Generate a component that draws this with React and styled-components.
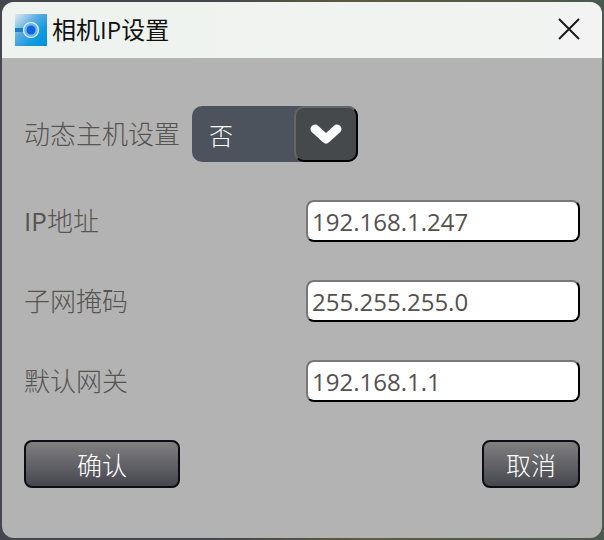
import React from 'react'
import styled, { createGlobalStyle } from 'styled-components'

const GlobalStyle = createGlobalStyle`
    html, body {
        margin: 0;
        padding: 0;
        width: 604px;
        height: 540px;
        overflow: hidden;
        background: #46464c;
    }
    * {
        box-sizing: border-box;
    }
`

const fontStack = `"Open Sans", "Noto Sans CJK SC", sans-serif`

const Page = styled.div`
    width: 604px;
    height: 540px;
    padding: 2px;
    background: linear-gradient(90deg, #46464e 0%, #46464e 36%, #5d5c3c 60%, #4a5a50 100%);
    font-family: ${fontStack};
`

const Window = styled.div`
    width: 600px;
    height: 536px;
    border-radius: 12px;
    overflow: hidden;
    background: #b3b3b3;
    display: flex;
    flex-direction: column;
`

const TitleBar = styled.div`
    height: 56px;
    flex: none;
    background: linear-gradient(90deg, #eef3ef 0%, #f2f3f2 100%);
    display: flex;
    align-items: center;
    padding: 0 14px 0 13px;
`

const TitleText = styled.div`
    margin-left: 5px;
    flex: 1;
    font-size: 24px;
    color: #111;
    line-height: 32px;
`

const CloseButton = styled.button`
    width: 22px;
    height: 22px;
    padding: 0;
    border: none;
    background: none;
    margin: 0 8px 2px 0;
    display: flex;
`

const Body = styled.div`
    flex: 1;
    padding: 48px 22px 0;
    display: flex;
    flex-direction: column;
    gap: 38px;
`

const Row = styled.div`
    display: flex;
    align-items: center;
    justify-content: ${props => props.$spread ? 'space-between' : 'flex-start'};
    gap: ${props => props.$gap || 0}px;
`

const Label = styled.label`
    font-size: 26px;
    font-weight: 300;
    line-height: 32px;
    color: #565351;
`

const LabelLatin = styled.span`
    font-weight: 400;
`

const Select = styled.div`
    width: 166px;
    height: 56px;
    border-radius: 10px;
    background: #4d535d;
    display: flex;
    align-items: center;
    justify-content: space-between;
    padding-left: 17px;
    color: #fff;
    font-size: 24px;
    font-weight: 300;
`

const SelectArrow = styled.div`
    width: 64px;
    height: 56px;
    border-radius: 10px;
    background: #46494b;
    border: 2px solid;
    border-color: #666 #000 #000 #666;
    display: flex;
    align-items: center;
    justify-content: center;
`

const Field = styled.input`
    width: 274px;
    height: 42px;
    border-radius: 8px;
    background: #fff;
    border: 2px solid;
    border-color: #787878 #000 #000 #787878;
    padding: 0 4px;
    outline: none;
    font-family: ${fontStack};
    font-size: 24px;
    color: #55514e;
`

const Button = styled.button`
    width: ${props => props.$width}px;
    height: 48px;
    padding: 0;
    border: 2px solid #0c0c14;
    border-radius: 8px;
    background: linear-gradient(180deg, #808080 0%, #46464f 100%);
    color: #fff;
    font-family: ${fontStack};
    font-size: 25px;
    font-weight: 300;
`

const CameraIcon = () => (
    <svg width="32" height="32" viewBox="0 0 32 32">
        <defs>
            <linearGradient id="iconBg" x1="0" y1="0" x2="1" y2="1">
                <stop offset="0" stopColor="#e2ebf3" />
                <stop offset="0.4" stopColor="#58abe0" />
                <stop offset="0.7" stopColor="#0f9ae2" />
                <stop offset="1" stopColor="#0090dc" />
            </linearGradient>
        </defs>
        <rect width="32" height="32" fill="url(#iconBg)" />
        <rect y="14" width="10" height="4" fill="#1c7fc8" />
        <circle cx="16" cy="16" r="7.5" fill="#6fb6ea" stroke="#f0f6fb" strokeWidth="1.2" />
        <circle cx="16" cy="16" r="4.5" fill="#0f62e0" />
    </svg>
)

const CloseIcon = () => (
    <svg width="22" height="22" viewBox="0 0 22 22">
        <path d="M1 1 L21 21 M21 1 L1 21" stroke="#1a1a1a" strokeWidth="2" fill="none" />
    </svg>
)

const ChevronIcon = () => (
    <svg width="34" height="22" viewBox="0 0 34 22">
        <path
            d="M6 6 L17 16 L28 6"
            fill="none"
            stroke="#fff"
            strokeWidth="9"
            strokeLinecap="round"
            strokeLinejoin="round"
        />
    </svg>
)

const fields = [
    { latin: 'IP', label: '地址', value: '192.168.1.247' },
    { label: '子网掩码', value: '255.255.255.0' },
    { label: '默认网关', value: '192.168.1.1' },
]

const App = () => (
    <Page>
        <GlobalStyle />
        <Window>
            <TitleBar>
                <CameraIcon />
                <TitleText>相机IP设置</TitleText>
                <CloseButton><CloseIcon /></CloseButton>
            </TitleBar>
            <Body>
                <Row $gap={12}>
                    <Label>动态主机设置</Label>
                    <Select>
                        否
                        <SelectArrow><ChevronIcon /></SelectArrow>
                    </Select>
                </Row>
                {fields.map(f => (
                    <Row $spread key={f.label}>
                        <Label>{f.latin && <LabelLatin>{f.latin}</LabelLatin>}{f.label}</Label>
                        <Field defaultValue={f.value} />
                    </Row>
                ))}
                <Row $spread>
                    <Button $width={156}>确认</Button>
                    <Button $width={98}>取消</Button>
                </Row>
            </Body>
        </Window>
    </Page>
)

export default App
